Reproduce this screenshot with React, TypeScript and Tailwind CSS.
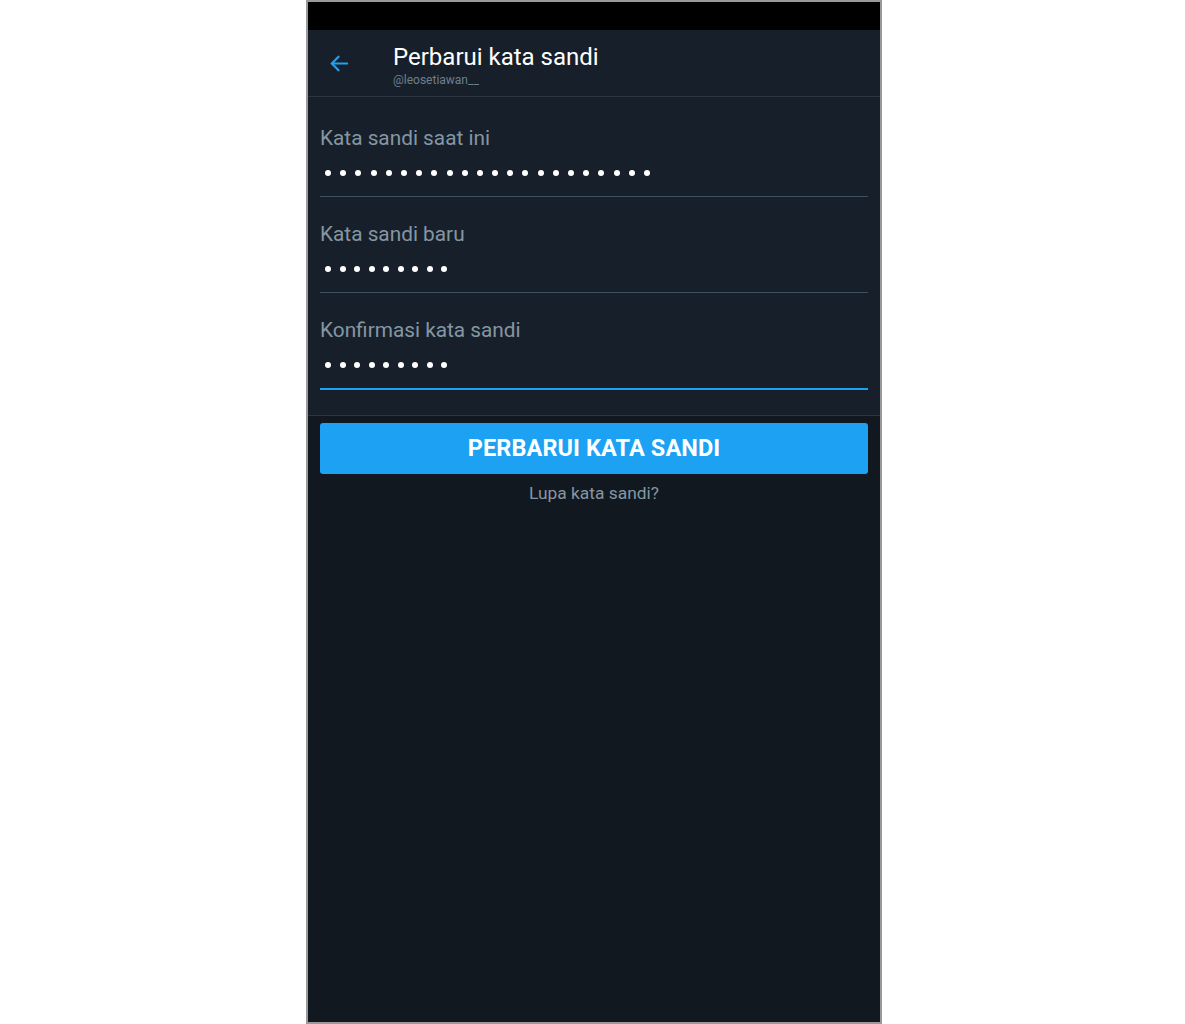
import React from 'react';

const font = { fontFamily: 'Roboto, "Noto Sans", sans-serif' };

interface FieldProps {
  label: string;
  count: number;
  active?: boolean;
}

const PasswordField: React.FC<FieldProps> = ({ label, count, active }) => {
  return (
    <div className="pt-[21px]">
      <div className="text-[20.8px] leading-[32px] text-[#8596a3]">{label}</div>
      <div className={`mt-[3px] flex items-center h-[32px] pl-[5px] ${count > 10 ? 'gap-[9.2px]' : 'gap-[8.5px]'}`}>
        {Array.from({ length: count }).map((_, i) => (
          <span key={i} className="w-[6px] h-[6px] rounded-full bg-white" />
        ))}
      </div>
      <div className={active ? 'mt-[7px] h-[2px] bg-[#1da1f2]' : 'mt-[7px] h-[1px] bg-[#3e5161]'} />
    </div>
  );
};

export default function App() {
  return (
    <div className="w-[1185px] h-[1024px] bg-white" style={font}>
      <div className="ml-[306px] w-[576px] h-[1024px] border-x-2 border-t-2 border-b-2 border-[#9a9a9a] flex flex-col bg-[#121820]">
        {/* status bar */}
        <div className="h-[28px] bg-black" />

        {/* header */}
        <div className="h-[67px] bg-[#17202a] flex items-center border-b border-[#2a3540]">
          <div className="w-[85px] pl-[20px] pt-[1px]">
            <svg width="23" height="23" viewBox="0 0 24 24" fill="none" stroke="#1da1f2" strokeWidth="2.3" strokeLinecap="round" strokeLinejoin="round">
              <path d="M20 12H4" />
              <path d="M11 5l-7 7 7 7" />
            </svg>
          </div>
          <div className="flex flex-col pt-[5px]">
            <div className="text-[24px] leading-[28px] text-white">Perbarui kata sandi</div>
            <div className="text-[12px] leading-[18px] text-[#6f7f8c]">@leosetiawan__</div>
          </div>
        </div>

        {/* form */}
        <div className="bg-[#17202a] px-[12px] pt-[4px] pb-[25px] border-b border-[#2a3540]">
          <PasswordField label="Kata sandi saat ini" count={22} />
          <PasswordField label="Kata sandi baru" count={9} />
          <PasswordField label="Konfirmasi kata sandi" count={9} active />
        </div>

        {/* actions */}
        <div className="px-[12px] pt-[7px] flex flex-col">
          <button className="h-[51px] w-full rounded-[3px] bg-[#1da1f2] text-white font-bold text-[23.5px] tracking-[0.1px]">
            PERBARUI KATA SANDI
          </button>
          <div className="text-center text-[17.4px] leading-[20px] mt-[9px] text-[#8596a3]">Lupa kata sandi?</div>
        </div>
      </div>
    </div>
  );
}
